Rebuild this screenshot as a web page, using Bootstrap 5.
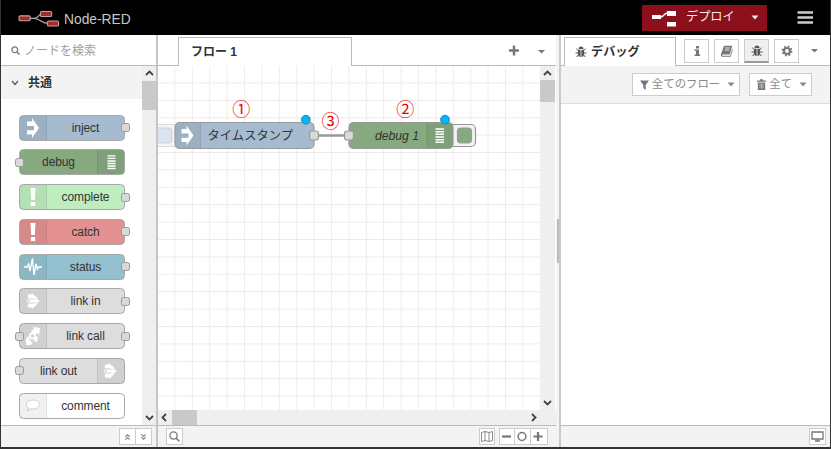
<!DOCTYPE html>
<html lang="ja">
<head>
<meta charset="utf-8">
<title>Node-RED</title>
<link href="https://cdn.jsdelivr.net/npm/bootstrap@5.3.0/dist/css/bootstrap.min.css" rel="stylesheet">
<style>
body{width:831px;height:449px;overflow:hidden;background:#333;font:12px/1 "Liberation Sans","Noto Sans CJK JP",sans-serif;color:#333}
svg{display:block;flex:none}
.app{width:829px;height:447px;margin-left:1px;background:#fff}
.topbar{height:35px;background:#000;padding:0 17px 0 17px}
.brand-name{font-size:13.8px;color:#c7c7c7}
.deploy{width:125px;height:26px;background:#8c101c;color:#eee;padding-left:10px;font-size:12.2px}
.palette{width:157px;border-right:2px solid #c5c5c5}
.search{height:31px;border-bottom:1px solid #bbb;color:#a0a0a0;padding:1px 0 0 10px;gap:4px}
.cat{height:33px;background:#f3f3f3;font-weight:700;padding-left:10px;gap:9px;font-size:12px}
.nodes{padding:15.5px 0 0 18px;gap:8.75px}
.pnode{width:106px;height:26px;border:1.3px solid #a8a8a8;border-radius:4.5px;position:relative;font-size:12px;letter-spacing:-.1px}
.pnode .ic{width:27px;background:rgba(0,0,0,.055);border-right:1px solid rgba(0,0,0,.07)}
.pnode.flip .ic{border-right:0;border-left:1px solid rgba(0,0,0,.07)}
.inp::before,.outp::after{content:"";position:absolute;top:7.5px;width:9px;height:9px;border:1.2px solid #999;border-radius:2.5px;background:#d9d9d9}
.inp::before{left:-5px}.outp::after{right:-6px}
.c-inject{background:#a6bbcf}.c-debug{background:#87a980}.c-complete{background:#c0edc0}.c-catch{background:#e49191}.c-status{background:#94c1d0}.c-link{background:#ddd}.c-comment{background:#fff}
.vbar{width:15px;background:#efefef}
.palette .vbar{width:14px}
.thumb{background:#c9c9c9}
.foot{height:22px;background:#f3f3f3;border-top:1px solid #bbb}
.fbtn{height:17px;border:1px solid #ccc;background:#fff}
.work{width:398px}
.tabs{height:31px;border-bottom:1px solid #bbb}
.tab-gap{width:20px}
.tab-on{height:29px;border:1px solid #bbb;border-bottom:0;background:#fff;font-weight:700;margin-bottom:-1px}
.flow-tab{width:174px;padding-left:12px;font-size:12px}
.hbar{height:15px;background:#efefef}
.split{width:5px;background:#f3f3f3;border-right:2px solid #c9c9c9}
.dbg-tab{width:112px;padding-left:10px;gap:4px;font-size:12.2px}
.sbtn{width:25px;height:24px;border:1px solid #ccc;background:#fff;margin-right:5px}
.sbtn.on{background:#efefef;border-bottom:2px solid #999}
.tools{height:38px;background:#f3f3f3;border-bottom:1px solid #ddd;padding-right:18px;gap:9px}
.tbtn{height:23px;border:1px solid #ccc;background:#fff;color:#888;font-size:11.4px;padding:0 4px 0 7px;gap:3px}
</style>
<script src="https://cdn.jsdelivr.net/npm/bootstrap@5.3.0/dist/js/bootstrap.bundle.min.js"></script>
</head>
<body>
<svg width="0" height="0" class="position-absolute">
<defs>
<symbol id="arrow" viewBox="0 0 14 20"><path fill="#fff" d="M1 3.500h5V0L13 10 6 20v-3.500H1v-4.300h7V8H1z"/></symbol>
<symbol id="lines" viewBox="0 0 10 16"><path stroke="#fff" stroke-width="1.6" d="M.5 1.2h9M.5 4h9M.5 6.8h9M.5 9.6h9M.5 12.4h9M.5 15.2h9"/></symbol>
<symbol id="bang" viewBox="0 0 6 18"><path fill="#fff" d="M.5 0h5l-.7 12H1.2zM.8 14h4.400v4H.8z"/></symbol>
<symbol id="linki" viewBox="0 0 14 18"><path fill="#fff" d="M1 2h4V0l7 6.500H7.500L4 6H1zM1 16h4v2l7-6.500H7.500L4 12H1zM9 6l5 3-5 3zM3 7.500h7v3H3z"/><circle cx="2.500" cy="9" r="2" fill="none" stroke="#fff"/></symbol>
<symbol id="caret" viewBox="0 0 8 5"><path d="M.5.5h7L4 4.500z" fill="currentColor"/></symbol>
<symbol id="bug" viewBox="0 0 12 12"><path fill="currentColor" d="M3.500 3a2.500 2.500 0 0 1 5 0zM3 3.800h2.600V11C4 11 3 9.800 3 8zM6.400 3.800H9V8c0 1.800-1 3-2.600 3z"/><path fill="none" stroke="currentColor" d="M3.200 4.500 1.300 2.800M8.800 4.500l1.900-1.700M3 7H.5M9 7h2.500M3.300 9 1.600 11M8.700 9l1.700 2"/></symbol>
</defs></svg>
<div class="app d-flex flex-column">
  <header class="topbar d-flex align-items-center">
    <svg width="42" height="19" viewBox="0 0 43 19"><path fill="none" stroke="#aaa" stroke-width="1.300" d="M12 10.500h4c6 0 5-5 9-5M16 10.500c7 0 8 5 15 5"/><g fill="#a32b2b" stroke="#c5a0a0" stroke-width="1.100"><rect x="1" y="7.800" width="11.500" height="5" rx="1.400"/><rect x="23" y="3.300" width="11.500" height="5.200" rx="1.400"/><rect x="30" y="13" width="11.500" height="5.200" rx="1.400"/></g></svg>
    <span class="brand-name ms-1 mt-1">Node-RED</span>
    <div class="deploy ms-auto d-flex align-items-center">
      <svg width="26" height="18" viewBox="0 0 26 18"><path fill="#fff" d="M0 6h9v4H0zM15 2h9v5h-9zM15 13h9v4.500h-9z"/><path d="M8 8c5 0 3-4 8-4" fill="none" stroke="#fff" stroke-width="1.300"/></svg>
      <span class="ms-2">デプロイ</span>
      <svg class="ms-auto me-2" width="8" height="5"><use href="#caret"/></svg>
    </div>
    <svg class="ms-4" width="22" height="14" viewBox="0 0 22 14"><path d="M6.500 1.500H22M6.500 6.500H22M6.500 11.500H22" stroke="#ccc" stroke-width="2.500"/></svg>
  </header>
  <main class="d-flex flex-grow-1">
    <aside class="palette d-flex flex-column">
      <div class="search d-flex align-items-center"><svg width="9" height="9" viewBox="0 0 9 9"><circle cx="3.800" cy="3.800" r="2.900" fill="none" stroke="#777" stroke-width="1.300"/><path d="m6 6 2.500 2.500" stroke="#777" stroke-width="1.400"/></svg><span>ノードを検索</span></div>
      <div class="d-flex flex-grow-1">
        <div class="flex-grow-1">
          <div class="cat d-flex align-items-center"><svg width="8" height="6" viewBox="0 0 8 6"><path d="m1 1 3 3.500L7 1" fill="none" stroke="#555" stroke-width="1.200"/></svg><span>共通</span></div>
          <div class="nodes d-flex flex-column">
            <div class="pnode c-inject outp d-flex"><span class="ic d-flex align-items-center justify-content-center"><svg width="14" height="20"><use href="#arrow"/></svg></span><span class="m-auto">inject</span></div>
            <div class="pnode c-debug inp flip d-flex"><span class="m-auto">debug</span><span class="ic d-flex align-items-center justify-content-center"><svg width="9" height="16"><use href="#lines"/></svg></span></div>
            <div class="pnode c-complete outp d-flex"><span class="ic d-flex align-items-center justify-content-center"><svg width="6" height="18"><use href="#bang"/></svg></span><span class="m-auto">complete</span></div>
            <div class="pnode c-catch outp d-flex"><span class="ic d-flex align-items-center justify-content-center"><svg width="6" height="18"><use href="#bang"/></svg></span><span class="m-auto">catch</span></div>
            <div class="pnode c-status outp d-flex"><span class="ic d-flex align-items-center justify-content-center"><svg width="18" height="20" viewBox="0 0 18 20"><path d="M0 10h3l1.500-3L6 14 8.500 1.500 10 18l2-11 1.500 5 1.200-2H18" fill="none" stroke="#fff" stroke-width="1.400"/></svg></span><span class="m-auto">status</span></div>
            <div class="pnode c-link outp d-flex"><span class="ic d-flex align-items-center justify-content-center"><svg width="13" height="18"><use href="#linki"/></svg></span><span class="m-auto">link in</span></div>
            <div class="pnode c-link inp outp d-flex"><span class="ic d-flex align-items-center justify-content-center"><svg width="16" height="18" viewBox="0 0 16 18"><path fill="#fff" d="m6 4 3-2-1-2 7 1-1 7-2-2-3 2zM1 12l2-3 3 6 2-1-2 4H1zM10 9l3 1-1 5-3-1z"/><circle cx="7.500" cy="9" r="2.600" fill="none" stroke="#fff" stroke-width="1.700"/></svg></span><span class="m-auto">link call</span></div>
            <div class="pnode c-link inp flip d-flex"><span class="m-auto">link out</span><span class="ic d-flex align-items-center justify-content-center"><svg width="13" height="18"><use href="#linki"/></svg></span></div>
            <div class="pnode c-comment d-flex"><span class="ic d-flex align-items-center justify-content-center"><svg width="16" height="14" viewBox="0 0 16 14"><path d="M8 1c4 0 6.500 2 6.500 4.500S12 10 8 10c-1 0-2 0-2.500-.3L2.500 12l.8-3C2 8.500 1.300 7 1.300 5.500 1.300 3 4 1 8 1z" fill="#fff" stroke="#ccc"/></svg></span><span class="m-auto">comment</span></div>
          </div>
        </div>
        <div class="vbar d-flex flex-column align-items-center">
          <svg width="15" height="15" viewBox="0 0 15 15"><path d="m4 9 3.500-3.500L11 9" fill="none" stroke="#444" stroke-width="1.800"/></svg>
          <div class="thumb w-100" style="height:29px"></div>
          <svg class="mt-auto" width="15" height="15" viewBox="0 0 15 15"><path d="m4 6 3.500 3.500L11 6" fill="none" stroke="#444" stroke-width="1.800"/></svg>
        </div>
      </div>
      <div class="foot d-flex align-items-center justify-content-end pe-1">
        <span class="fbtn px-1 d-flex align-items-center"><svg width="7" height="8" viewBox="0 0 8 8"><path d="m1.500 3.700L4 1.400l2.500 2.300M1.500 7 4 4.700 6.500 7" fill="none" stroke="#888" stroke-width="1.300"/></svg></span>
        <span class="fbtn border-start-0 px-1 d-flex align-items-center"><svg width="7" height="8" viewBox="0 0 8 8"><path d="M1.500 1 4 3.300 6.500 1M1.500 4.300 4 6.600l2.500-2.300" fill="none" stroke="#888" stroke-width="1.300"/></svg></span>
      </div>
    </aside>
    <section class="work d-flex flex-column">
      <div class="tabs d-flex align-items-end">
        <span class="tab-gap"></span>
        <div class="tab-on flow-tab d-flex align-items-center">フロー 1</div>
        <svg class="ms-auto mb-2" width="53" height="14" viewBox="0 0 53 14"><path d="M6 7.500h10M11 2.500v10" stroke="#777" stroke-width="2.500"/><path d="M35 7h7l-3.500 3.500z" fill="#777"/></svg>
      </div>
      <div class="d-flex flex-grow-1">
        <svg width="382" height="344" viewBox="158 66 382 344" font-family="Liberation Sans,Noto Sans CJK JP,sans-serif">
          <defs><pattern id="grid" x="158" y="66" width="17.400" height="17.400" patternUnits="userSpaceOnUse"><path d="M17 0v17.400M0 17h17.400" stroke="#ececec" fill="none"/></pattern></defs>
          <rect x="158" y="66" width="382" height="344" fill="#fff"/><rect x="158" y="66" width="382" height="344" fill="url(#grid)"/>
          <g stroke="#ddd"><rect x="150" y="124.500" width="40" height="22" rx="4" fill="#f5f5f5"/><rect x="152" y="128" width="20" height="15" rx="3" fill="#dbe4ed" stroke="#c8d3df"/></g>
          <path d="M314 135.500h35" stroke="#999" stroke-width="2.600"/>
          <g stroke="#999" stroke-width="1.200">
            <rect x="440" y="124.500" width="35.500" height="22" rx="4.500" fill="#f3f3f3"/><rect x="457.500" y="128" width="14" height="15" rx="3.500" fill="#87a980"/>
            <rect x="175" y="122.500" width="139" height="26" rx="4.500" fill="#a6bbcf"/><rect x="349" y="122.500" width="104" height="26" rx="4.500" fill="#87a980"/>
          </g>
          <path d="M179 123h21.500v25H179q-3.500 0-3.500-4v-17q0-4 3.500-4zM427 123h22q3.500 0 3.500 4v17q0 4-3.500 4h-22z" fill="#000" fill-opacity=".06"/>
          <path d="M200.500 123v25M427 123v25" stroke="#000" stroke-opacity=".1"/>
          <use href="#arrow" x="180.500" y="125.500" width="14" height="20"/><use href="#lines" x="435" y="127.500" width="9.500" height="16"/>
          <g fill="#d9d9d9" stroke="#999" stroke-width="1.200"><rect x="309.500" y="131" width="9" height="9" rx="2.500"/><rect x="344.500" y="131" width="9" height="9" rx="2.500"/></g>
          <text x="207.500" y="140" font-size="12.300" fill="#333">タイムスタンプ</text><text x="375" y="139.500" font-size="12.200" font-style="italic" fill="#333">debug 1</text>
          <g fill="#00b4f5" stroke="#2a8bb5"><circle cx="305.800" cy="119.700" r="4.400"/><circle cx="445" cy="119.700" r="4.400"/></g>
          <g font-family="Noto Sans CJK JP,sans-serif" font-size="18" fill="#f00000" text-anchor="middle"><text x="241.300" y="116">①</text><text x="405.300" y="116">②</text><text x="330.500" y="128">③</text></g>
        </svg>
        <div class="vbar d-flex flex-column align-items-center">
          <svg width="15" height="14" viewBox="0 0 15 14"><path d="m4 9 3.500-3.500L11 9" fill="none" stroke="#444" stroke-width="1.800"/></svg>
          <div class="thumb w-100" style="height:22px"></div>
          <svg class="mt-auto" width="15" height="15" viewBox="0 0 15 15"><path d="m4 6 3.500 3.500L11 6" fill="none" stroke="#444" stroke-width="1.800"/></svg>
        </div>
      </div>
      <div class="hbar d-flex align-items-center">
        <svg width="14" height="15" viewBox="0 0 14 15"><path d="M8 4 4.500 7.500 8 11" fill="none" stroke="#444" stroke-width="1.800"/></svg>
        <div class="thumb h-100" style="width:25px"></div>
        <svg class="ms-auto me-3" width="12" height="15" viewBox="0 0 12 15"><path d="m4 4 3.500 3.500L4 11" fill="none" stroke="#444" stroke-width="1.800"/></svg>
      </div>
      <div class="foot d-flex align-items-center ps-2">
        <span class="fbtn d-flex align-items-center"><svg width="15" height="13" viewBox="0 0 15 13"><circle cx="6.500" cy="5.500" r="3.600" fill="none" stroke="#777" stroke-width="1.300"/><path d="m9 8 3.300 3.300" stroke="#777" stroke-width="1.600"/></svg></span>
        <span class="fbtn d-flex align-items-center ms-auto me-1"><svg width="14" height="13" viewBox="0 0 14 13"><path d="m1.500 2.500 3.500-1 4 1 3.500-1v9l-3.500 1-4-1-3.500 1zM5 1.500v9M9 2.500v9" fill="none" stroke="#888"/></svg></span>
        <span class="fbtn d-flex align-items-center"><svg width="14" height="13"><path d="M2 6.500h9" stroke="#777" stroke-width="2.200"/></svg></span>
        <span class="fbtn border-start-0 d-flex align-items-center"><svg width="15" height="13"><circle cx="7" cy="6.500" r="3.900" fill="none" stroke="#777" stroke-width="1.500"/></svg></span>
        <span class="fbtn border-start-0 d-flex align-items-center me-2"><svg width="16" height="13"><path d="M2.500 6.500h9M7 2v9" stroke="#777" stroke-width="2.200"/></svg></span>
      </div>
    </section>
    <div class="split d-flex align-items-center"><svg width="4" height="44"><path d="M2 0v44" stroke="#bbb" stroke-width="2"/></svg></div>
    <aside class="flex-grow-1 d-flex flex-column">
      <div class="tabs d-flex align-items-end">
        <span style="width:3px"></span>
        <div class="tab-on dbg-tab d-flex align-items-center"><svg width="12" height="12" color="#555"><use href="#bug"/></svg><span>デバッグ</span></div>
        <div class="d-flex align-items-center ms-auto" style="margin-bottom:2px">
          <span class="sbtn d-flex align-items-center justify-content-center"><svg width="8" height="12"><path d="M3 1h3v2.400H3zM1.500 4.500H6v5h1.200V11H1.500V9.500H3V6H1.500z" fill="#777"/></svg></span>
          <span class="sbtn d-flex align-items-center justify-content-center"><svg width="13" height="12" viewBox="0 0 13 12"><path d="M4 .8h8.200L9.800 9.500H2.500q-1 .8 0 1.300h7.800l1.900-7 .6.700-2 7.300H2Q.2 11 1 9z" fill="#777"/><path d="M5.300 3h4.500M4.800 5h4.500" stroke="#fff" stroke-width=".8"/></svg></span>
          <span class="sbtn on d-flex align-items-center justify-content-center"><svg width="12" height="12" color="#555"><use href="#bug"/></svg></span>
          <span class="sbtn d-flex align-items-center justify-content-center"><svg width="12" height="12" viewBox="0 0 12 12"><circle cx="6" cy="6" r="3" fill="none" stroke="#777" stroke-width="2.200"/><circle cx="6" cy="6" r="4.700" fill="none" stroke="#777" stroke-width="1.500" stroke-dasharray="1.850 1.840"/></svg></span>
          <svg width="26" height="6" viewBox="0 0 26 6"><path d="M7 1h7l-3.500 3.500z" fill="#777"/></svg>
        </div>
      </div>
      <div class="tools d-flex align-items-center justify-content-end">
        <span class="tbtn d-flex align-items-center"><svg width="9" height="10"><path d="M0 .5h9L5.700 5v5L3.300 8V5z" fill="#777"/></svg><span>全てのフロー</span><svg class="ms-1" width="8" height="5"><use href="#caret"/></svg></span>
        <span class="tbtn d-flex align-items-center"><svg width="9" height="11" viewBox="0 0 9 11"><path d="M0 1.500h3V.3h3v1.200h3v1.300H0zM.8 3.500h7.400V11H.8z" fill="#777"/><path d="M3 4.500v5M4.500 4.500v5M6 4.500v5" stroke="#ddd" stroke-width=".6"/></svg><span>全て</span><svg class="ms-1" width="8" height="5"><use href="#caret"/></svg></span>
      </div>
      <div class="flex-grow-1"></div>
      <div class="foot d-flex align-items-center justify-content-end pe-1">
        <span class="fbtn d-flex align-items-center"><svg width="15" height="13"><path d="M2 2h11v7H2zM5 11h5M7.500 9v2" fill="none" stroke="#777" stroke-width="1.300"/></svg></span>
      </div>
    </aside>
  </main>
</div>
</body>
</html>
